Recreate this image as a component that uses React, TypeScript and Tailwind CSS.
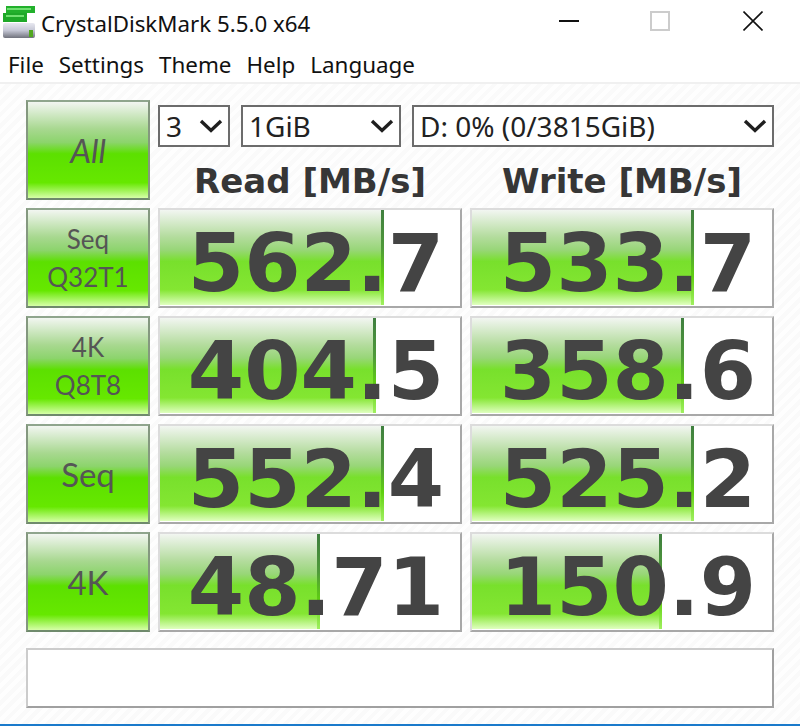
const rows = [
  { label: ["Seq", "Q32T1"], big: false, read: "562.7", readBar: 224, write: "533.7", writeBar: 222 },
  { label: ["4K", "Q8T8"], big: false, read: "404.5", readBar: 216, write: "358.6", writeBar: 212 },
  { label: ["Seq"], big: true, read: "552.4", readBar: 224, write: "525.2", writeBar: 222 },
  { label: ["4K"], big: true, read: "48.71", readBar: 160, write: "150.9", writeBar: 190 },
];

const Chevron = () => (
  <svg width="24" height="14" viewBox="0 0 24 14" className="shrink-0">
    <path d="M2 2 L12 11.5 L22 2" fill="none" stroke="#1f1f1f" strokeWidth="3.4" />
  </svg>
);

const Select = ({ text, className }: { text: string; className: string }) => (
  <div
    className={`h-[42px] flex items-center justify-between border-2 border-[#6c6c6c] bg-white pl-[6px] pr-[5px] text-[28px] leading-none text-[#222] ${className}`}
  >
    <span>{text}</span>
    <Chevron />
  </div>
);

const TestButton = ({ lines, big, italic }: { lines: string[]; big?: boolean; italic?: boolean }) => (
  <div
    className={`h-[100px] flex flex-col items-center justify-center border-2 border-t-[#8fa58d] border-x-[#84987f] border-b-[#6f8a6c] bg-[linear-gradient(to_bottom,#f2f6f1_0%,#a8d890_28%,#8cd46c_42%,#5ce000_54%,#66e800_84%,#d6ffa8_100%)] font-['Lato',sans-serif] leading-[38px] text-[#555555] ${big ? "text-[33px]" : "text-[26px]"} ${italic ? "italic" : ""}`}
  >
    {lines.map((l) => (
      <span key={l}>{l}</span>
    ))}
  </div>
);

const ValueCell = ({ value, bar }: { value: string; bar: number }) => (
  <div className="relative h-[100px] border-2 border-t-[#dcdcdc] border-l-[#dcdcdc] border-r-[#a8a8a8] border-b-[#a8a8a8] bg-white">
    <div
      className="absolute left-0 top-0 bottom-[1px] bg-[linear-gradient(to_bottom,#f2f6f1_0%,#b4dc9e_28%,#98d678_42%,#78e02c_54%,#84e632_84%,#e0ffc0_100%)]"
      style={{ width: bar }}
    >
      <div className="absolute right-0 top-0 bottom-0 w-[3px] bg-[linear-gradient(to_bottom,#3f7f3f_0%,#4f9a3a_40%,#60d010_70%,#a0f060_100%)]" />
    </div>
    <div className="relative h-full flex items-center justify-end pr-[16px] pt-[11px] font-['DejaVu_Sans',sans-serif] font-bold text-[81px] leading-none text-[#444444]">
      {value}
    </div>
  </div>
);

export default function App() {
  return (
    <div className="w-[800px] h-[726px] bg-white font-['Noto_Sans',sans-serif] overflow-hidden">
      <div className="h-[48px] flex items-center pl-[3px] relative">
        <svg width="33" height="33" viewBox="0 0 33 33" className="mr-[5px] mt-[-3px]">
          <defs>
            <linearGradient id="disk" x1="0" y1="0" x2="0" y2="1">
              <stop offset="0" stopColor="#e8e8f0" />
              <stop offset="0.5" stopColor="#c4c6d4" />
              <stop offset="1" stopColor="#70727c" />
            </linearGradient>
          </defs>
          <rect x="0" y="17" width="32" height="15" rx="2" fill="url(#disk)" />
          <rect x="3" y="0" width="29" height="7" fill="#22b02c" />
          <rect x="0" y="7" width="24" height="9" fill="#1ea828" />
          <rect x="4" y="2" width="24" height="2" fill="#6fe070" />
          <rect x="3" y="9" width="18" height="2" fill="#70e070" />
          <rect x="26" y="24" width="4" height="7" fill="#52a820" />
        </svg>
        <span className="text-[22.3px] text-[#111] leading-none">CrystalDiskMark 5.5.0 x64</span>
        <div className="absolute top-[20px] left-[559px] w-[20px] h-[2px] bg-[#111]" />
        <div className="absolute top-[11px] left-[650px] w-[20px] h-[20px] border-2 border-[#cccccc]" />
        <svg width="20" height="20" viewBox="0 0 20 20" className="absolute top-[11px] left-[743px]">
          <path d="M0.5 0.5 L19.5 19.5 M19.5 0.5 L0.5 19.5" stroke="#111" strokeWidth="1.6" />
        </svg>
      </div>
      <div className="h-[34px] flex items-center gap-[15px] pl-[8px] text-[22.4px] text-[#111] leading-none border-b-2 border-[#f0f0f0] box-content">
        <span>File</span>
        <span>Settings</span>
        <span>Theme</span>
        <span>Help</span>
        <span>Language</span>
      </div>
      <div className="h-[642px] border-b-2 border-[#1a7acb] px-[26px] pt-4 bg-[repeating-linear-gradient(135deg,#fefefe_0px,#fefefe_4px,#fafafa_4px,#fafafa_8px)]">
        <div className="grid grid-cols-[124px_304px_304px] gap-2">
          <TestButton lines={["All"]} big italic />
          <div className="col-span-2 h-[100px] flex flex-col">
            <div className="flex gap-[11px] mt-[5px]">
              <Select text="3" className="w-[72px]" />
              <Select text="1GiB" className="w-[160px]" />
              <Select text="D: 0% (0/3815GiB)" className="w-[362px]" />
            </div>
            <div className="grid grid-cols-2 gap-2 font-['DejaVu_Sans',sans-serif] font-bold text-[34px] leading-[40px] text-[#363636] text-center mt-[14px]">
              <span>Read [MB/s]</span>
              <span>Write [MB/s]</span>
            </div>
          </div>
          {rows.map((r) => (
            <div key={r.read} className="contents">
              <TestButton lines={r.label} big={r.big} />
              <ValueCell value={r.read} bar={r.readBar} />
              <ValueCell value={r.write} bar={r.writeBar} />
            </div>
          ))}
        </div>
        <div className="mt-4 h-[60px] border-2 border-t-[#cccccc] border-l-[#cccccc] border-r-[#a0a0a0] border-b-[#a0a0a0] bg-white" />
      </div>
    </div>
  );
}
